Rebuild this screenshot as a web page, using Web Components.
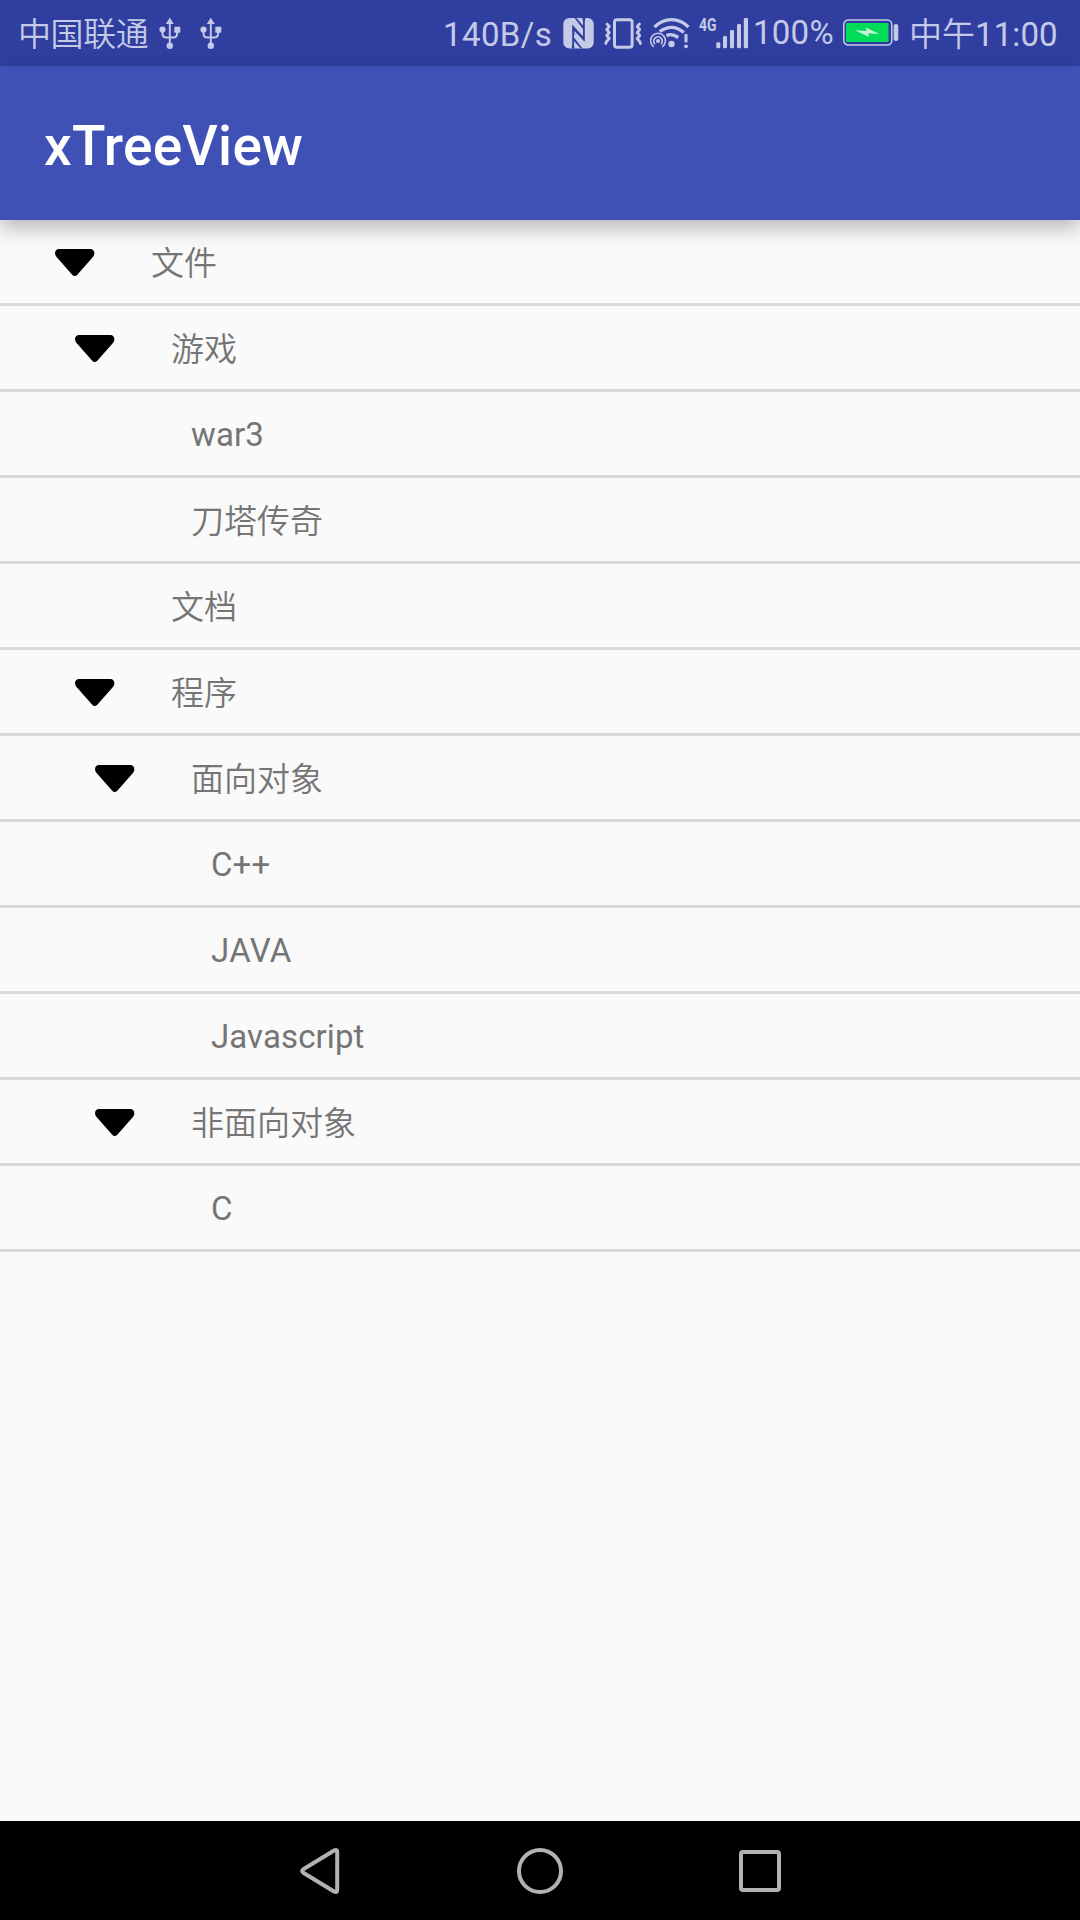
<!DOCTYPE html>
<html lang="zh-CN">
<head>
<meta charset="utf-8">
<title>xTreeView</title>
<style>
html,body{margin:0;height:100%;background:#fafafa}
body{font-family:Roboto,"Noto Sans CJK SC",sans-serif;overflow:hidden}
</style>
</head>
<body>
<tree-screen>
  <status-bar slot="status"></status-bar>
  <app-bar slot="bar">xTreeView</app-bar>
  <tree-row level="0" open>文件</tree-row>
  <tree-row level="1" open>游戏</tree-row>
  <tree-row level="2">war3</tree-row>
  <tree-row level="2">刀塔传奇</tree-row>
  <tree-row level="1">文档</tree-row>
  <tree-row level="1" open>程序</tree-row>
  <tree-row level="2" open>面向对象</tree-row>
  <tree-row level="3">C++</tree-row>
  <tree-row level="3" style="--track:.35px">JAVA</tree-row>
  <tree-row level="3">Javascript</tree-row>
  <tree-row level="2" open>非面向对象</tree-row>
  <tree-row level="3">C</tree-row>
  <nav-bar slot="nav"></nav-bar>
</tree-screen>
<script>
class Base extends HTMLElement {
  constructor() {
    super();
    this.attachShadow({mode: 'open'}).innerHTML = this.constructor.html;
  }
}
customElements.define('tree-screen', class extends Base {
  static html = `<style>
    :host{display:flex;flex-direction:column;width:1080px;height:1920px;background:#fafafa}
    main{flex:1;display:flex;flex-direction:column}
  </style><slot name="status"></slot><slot name="bar"></slot><main><slot></slot></main><slot name="nav"></slot>`;
});
customElements.define('usb-icon', class extends Base {
  static html = `<style>:host{display:block;width:22px;height:32px}svg{display:block}</style>
  <svg width="22" height="32" viewBox="0 0 22 32" fill="none" stroke="#c5cae9" stroke-width="1.9">
    <path d="M10.8 5V28M3.5 13v3.5q0 4 4 4h6.600q4 0 4-4V13"/>
    <g fill="#c5cae9" stroke="none"><path d="M10.800 .8l4 6.300h-8z"/><circle cx="3.500" cy="12.500" r="3.100"/><rect x="15.300" y="9.800" width="6" height="6" rx=".7"/><circle cx="10.800" cy="28.700" r="3.200"/></g>
  </svg>`;
});
customElements.define('nfc-icon', class extends Base {
  static html = `<style>:host{display:block;width:31px;height:32px}svg{display:block}</style>
  <svg width="31" height="32" viewBox="0 0 31 32">
    <rect x=".3" y="1" width="30.400" height="30.500" rx="6" fill="#c5cae9"/>
    <g fill="#303f9f">
      <path d="M8.200 31.500Q9.700 30 9.700 27.500V9.500L20.500 21V23.500L11.800 14.500V19L21 31.500H18L11.200 23V28Q11.200 30 12 31.500Z" opacity="0"/>
      <path d="M8.300 31.500Q9.200 30 9.200 27.500V7.500L11 9.500V20.500L19.500 31.500H17.500L11 24V28Q11 30 11.800 31.500Z"/>
      <path d="M22.700 1Q21.800 2.500 21.800 5V25L20 22.500V12L11.500 1H13.500L20 8.500V4.500Q20 2.500 19.200 1Z"/>
      <path d="M10 8.500L21 20.500V24L11.500 14V18H10Z"/>
    </g>
  </svg>`;
});
customElements.define('vibrate-icon', class extends Base {
  static html = `<style>:host{display:block;width:39px;height:32px}svg{display:block}</style>
  <svg width="39" height="32" viewBox="0 0 39 32" fill="none" stroke="#c5cae9">
    <rect x="10.500" y="2.700" width="17.600" height="27.600" rx="2.600" stroke-width="3"/>
    <path stroke-width="2.800" stroke-linejoin="round" stroke-linecap="round" d="M3 7L5.300 9.500 2.700 12.500 5.300 15.500 2.700 18.500 5.300 21.500 2.500 24.500 1.800 26.500M35.500 7L33.200 9.500 35.700 12.500 33.200 15.500 35.700 18.500 33.200 21.500 35.700 24.500 36.500 26.500"/>
  </svg>`;
});
customElements.define('wifi-icon', class extends Base {
  static html = `<style>:host{display:block;width:40px;height:32px}svg{display:block}</style>
  <svg width="40" height="32" viewBox="0 0 40 32" fill="none" stroke="#c5cae9">
    <path stroke-width="3.300" d="M4.500 10Q12 2.700 21.500 2.700T38.500 10M9.800 14.500Q15.500 10.300 21.700 10.300T33.800 15.500M16.500 18.700Q21.500 16 28.300 20.500"/>
    <g stroke-width="1.600"><path d="M3.800 29.800A7.400 7.400 0 1 1 12.200 29.800"/><path d="M5 27.200A4.300 4.300 0 1 1 11 27.200"/></g>
    <g fill="#c5cae9" stroke="none"><circle cx="8" cy="24" r="2"/><circle cx="21.500" cy="27" r="3.200"/><rect x="34.500" y="17" width="3" height="8.500" rx="1"/><circle cx="36" cy="29.300" r="1.900"/></g>
  </svg>`;
});
customElements.define('signal-icon', class extends Base {
  static html = `<style>:host{display:flex;width:50px;height:32px}svg{display:block;flex:none;margin-left:-.5px}span{font-size:19px;font-weight:700;line-height:24px;height:24px;width:17px;margin-top:-4px;transform:scaleX(.73);transform-origin:0 0}</style>
  <span>4G</span>
  <svg width="33" height="32" viewBox="17 0 33 32" fill="#c5cae9">
    <rect x="17.300" y="25.300" width="4" height="6" rx="1.300"/><rect x="24" y="19" width="4" height="12.300" rx="1.300"/><rect x="31" y="13" width="4" height="18.300" rx="1.300"/><rect x="38" y="7" width="4" height="24.300" rx="1.300"/><rect x="44.800" y="1" width="4.200" height="30.300" rx="1.300"/>
  </svg>`;
});
customElements.define('battery-icon', class extends Base {
  static html = `<style>:host{display:block;width:56px;height:28px}svg{display:block}</style>
  <svg width="56" height="28" viewBox="0 0 56 28">
    <rect x=".8" y="1" width="48" height="25" rx="4.500" fill="none" stroke="#c5cae9" stroke-width="1.500"/>
    <rect x="3" y="4" width="42.500" height="19" rx="1" fill="#00dc5a"/>
    <path d="M12 11.300l12 .8-1.500-3.600L36.500 15l-11.500-.7 1.200 3.800z" fill="#c8f5d5"/>
    <rect x="50.700" y="5" width="4.600" height="17" rx="2.300" fill="#c5cae9"/>
  </svg>`;
});
customElements.define('status-bar', class extends Base {
  static html = `<style>
    :host{display:flex;height:66px;background:#303f9f;color:#c5cae9;font-size:33px;align-items:flex-start;box-sizing:border-box;white-space:nowrap}
    span{display:block;line-height:66px;margin-top:2px;height:64px;flex:none}
    .cjk{font-weight:350}
    b{font-weight:400;letter-spacing:.1px}
    usb-icon,nfc-icon,vibrate-icon,wifi-icon,signal-icon{margin-top:17px;flex:none}
    battery-icon{margin-top:19px;flex:none}
    .carrier{width:141px;padding-left:18px;box-sizing:border-box;letter-spacing:-.4px}
  </style>
  <span class="carrier cjk">中国联通</span>
  <usb-icon style="margin-left:18px"></usb-icon><usb-icon style="margin-left:19px"></usb-icon>
  <span style="margin-left:221px;width:120px;letter-spacing:.4px">140B/s</span>
  <nfc-icon></nfc-icon>
  <vibrate-icon style="margin-left:10px"></vibrate-icon>
  <wifi-icon style="margin-left:7px"></wifi-icon>
  <signal-icon style="margin-left:9px"></signal-icon>
  <span style="margin:0 0 0 4px;width:90px;letter-spacing:.25px">100%</span>
  <battery-icon></battery-icon>
  <span class="cjk" style="margin-left:10px">中午<b>11:00</b></span>`;
});
customElements.define('app-bar', class extends Base {
  static html = `<style>
    :host{display:flex;align-items:center;height:154px;background:#3f51b5;color:#fff;font-size:55px;font-weight:500;letter-spacing:.25px;padding-left:44px;box-sizing:border-box;position:relative;z-index:1;box-shadow:0 8px 20px 0 rgba(0,0,0,.27)}
    span{line-height:154px;padding-top:6px}
  </style><span><slot></slot></span>`;
});
customElements.define('tree-row', class extends Base {
  static html = `<style>
    :host{display:flex;height:86px;box-sizing:border-box;border-bottom:3px solid #dadada;padding-left:calc(55px + var(--level)*20px);color:#757575;font-size:33px}
    svg{width:40px;height:27px;margin-top:29px;visibility:hidden;flex:none}
    :host([open]) svg{visibility:visible}
    span{line-height:83px;margin-left:56px;margin-top:var(--drop,1px);height:80px;letter-spacing:var(--track,.1px)}
  </style>
  <svg viewBox="0 0 40 27"><path d="M3.500 0H36Q39.200 .5 39.400 4.500Q39.200 6.500 37.500 8.500L22.500 25.500Q19.700 28.500 17 25.500L2 8.500Q.2 6.500 0 4.500Q0 .5 3.500 0Z"/></svg>
  <span><slot></slot></span>`;
  connectedCallback() {
    this.style.setProperty('--level', +this.getAttribute('level'));
    if (/[\u4e00-\u9fff]/.test(this.textContent)) {
      this.style.fontWeight = 350;
      this.style.setProperty('--drop', '2px');
      this.style.setProperty('--track', '0px');
    }
  }
});
customElements.define('nav-bar', class extends Base {
  static html = `<style>
    :host{display:flex;height:99px;background:#000;align-items:center;justify-content:center;gap:174px}
    svg{width:46px;height:46px;fill:none;stroke:#b2b2b2;stroke-width:4;stroke-linejoin:round;display:block;margin-top:1px}
  </style>
  <svg viewBox="-3 0 46 46"><path d="M3.300 21.300L34.500 2.300Q37.200 1.300 37.200 4V42Q37.200 44.700 34.500 43.700L3.300 24.700Q1 23 3.300 21.300Z"/></svg>
  <svg viewBox="0 0 46 46"><circle cx="23" cy="23" r="21"/></svg>
  <svg viewBox="0 0 46 46"><rect x="4" y="4" width="38" height="38" rx="2"/></svg>`;
});
</script>
</body>
</html>
